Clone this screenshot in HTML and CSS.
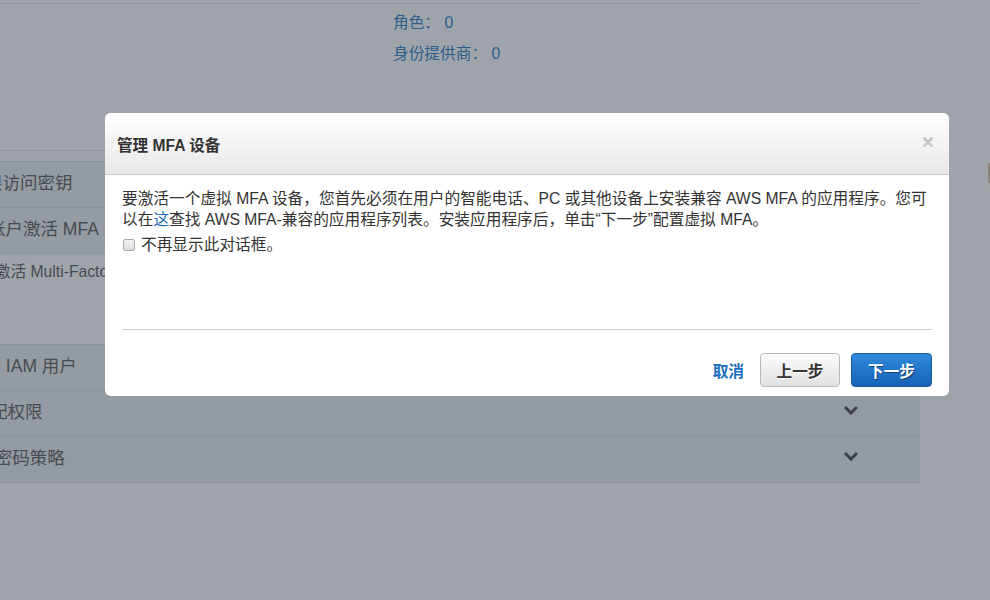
FILE: index.html
```html
<!DOCTYPE html>
<html lang="zh-CN">
<head>
<meta charset="utf-8">
<title>管理 MFA 设备</title>
<link rel="stylesheet" href="styles.css">
</head>
<body>
<div class="layout">
  <div class="page">
    <div class="topbar"></div>
    <div class="stats">
      <div class="stat">角色： 0</div>
      <div class="stat">身份提供商： 0</div>
    </div>
    <div class="panel">
      <div class="panel-head"></div>
      <div class="row">
        <span class="label label-1">删除您的根访问密钥</span>
        <svg class="chev" width="16" height="10" viewBox="0 0 16 10"><path d="M2 2l6 6 6-6" fill="none" stroke="currentColor" stroke-width="3"/></svg>
      </div>
      <div class="row">
        <span class="label label-2">在您的根账户激活 MFA</span>
        <svg class="chev" width="16" height="10" viewBox="0 0 16 10"><path d="M2 2l6 6 6-6" fill="none" stroke="currentColor" stroke-width="3"/></svg>
      </div>
      <div class="sub">
        <span class="sub-text">在您的根账户上激活 Multi-Factor Authentication (MFA)，以提高安全性。</span>
      </div>
      <div class="row">
        <span class="label label-3">创建单个 IAM 用户</span>
        <svg class="chev" width="16" height="10" viewBox="0 0 16 10"><path d="M2 2l6 6 6-6" fill="none" stroke="currentColor" stroke-width="3"/></svg>
      </div>
      <div class="row">
        <span class="label label-4">使用组分配权限</span>
        <svg class="chev" width="16" height="10" viewBox="0 0 16 10"><path d="M2 2l6 6 6-6" fill="none" stroke="currentColor" stroke-width="3"/></svg>
      </div>
      <div class="row">
        <span class="label label-5">应用 IAM 密码策略</span>
        <svg class="chev" width="16" height="10" viewBox="0 0 16 10"><path d="M2 2l6 6 6-6" fill="none" stroke="currentColor" stroke-width="3"/></svg>
      </div>
    </div>
  </div>
  <div class="side">
    <div class="side-edge"></div>
  </div>
</div>

<div class="modal">
  <div class="modal-header">
    <h2 class="modal-title">管理 MFA 设备</h2>
    <svg class="close" width="10" height="10" viewBox="0 0 10 10"><path d="M1.5 1.5l7 7M8.5 1.5l-7 7" stroke="currentColor" stroke-width="3" stroke-linecap="round"/></svg>
  </div>
  <div class="modal-content">
    <div class="modal-body">
      <p class="intro">要激活一个虚拟 MFA 设备，您首先必须在用户的智能电话、PC 或其他设备上安装兼容 AWS MFA 的应用程序。您可以在<a class="link" href="#">这</a>查找 AWS MFA-兼容的应用程序列表。安装应用程序后，单击“下一步”配置虚拟 MFA。</p>
      <label class="check"><input type="checkbox" class="box"><span>不再显示此对话框。</span></label>
    </div>
    <div class="modal-footer">
      <a class="cancel" href="#">取消</a>
      <button class="btn btn-default">上一步</button>
      <button class="btn btn-primary">下一步</button>
    </div>
  </div>
</div>
</body>
</html>
```

FILE: styles.css
```css
html, body {
  margin: 0;
  padding: 0;
}
body {
  background: #9ea4aa;
  font-family: "Liberation Sans", "Noto Sans CJK SC", sans-serif;
  font-size: 15.7px;
  color: #333;
  width: 990px;
  height: 600px;
  overflow: hidden;
  position: relative;
}
.layout {
  display: flex;
}
.page {
  width: 920px;
  flex: none;
}
.side {
  margin-left: 68px;
  width: 2px;
}
.side-edge {
  margin-top: 163px;
  height: 20px;
  background: #8b8679;
  border-bottom: 9px solid #a0a5aa;
}
.topbar {
  height: 3px;
  border-bottom: 1px solid #8c9298;
}
.stats {
  padding: 8px 0 0 393px;
  display: flex;
  flex-direction: column;
  gap: 10px;
}
.stat {
  line-height: 21px;
  color: #2d5e8a;
}
.panel {
  margin-top: 86px;
  border-top: 1px solid #8f959b;
  border-bottom: 1px solid #8d939a;
  background: #959ba2;
  overflow: hidden;
}
.panel-head {
  height: 10px;
  background: #9da3a9;
}
.row {
  height: 38px;
  border-top: 1px solid #8d939a;
  display: flex;
  align-items: center;
  justify-content: space-between;
  padding-right: 61px;
  padding-bottom: 7px;
}
.label {
  font-size: 17.5px;
  color: #474c52;
  white-space: nowrap;
}
.label-1 { margin-left: -85px; }
.label-2 { margin-left: -82px; }
.label-3 { margin-left: -69px; }
.label-4 { margin-left: -80px; }
.label-5 { margin-left: -81px; }
.chev {
  color: #3d4248;
  flex: none;
}
.sub {
  height: 91px;
  border-top: 1px solid #8f959b;
  background: #9ea4aa;
  padding-top: 8px;
  box-sizing: border-box;
  overflow: hidden;
}
.sub-text {
  display: block;
  margin-left: -115px;
  white-space: nowrap;
  color: #474c52;
  line-height: 20px;
}

.modal {
  position: absolute;
  left: 105px;
  top: 113px;
  width: 844px;
  height: 283px;
  background: #fff;
  border-radius: 6px;
  overflow: hidden;
  display: flex;
  flex-direction: column;
}
.modal-header {
  height: 61px;
  flex: none;
  border-bottom: 1px solid #c9c9c9;
  background: linear-gradient(#ffffff, #e8e8e8);
  display: flex;
  align-items: center;
  justify-content: space-between;
  padding: 0 16px 0 12px;
}
.modal-title {
  margin: 0;
  font-size: 15.6px;
  font-weight: bold;
  color: #333;
}
.close {
  color: #c6c6c6;
  margin-top: -3px;
}
.modal-content {
  flex: 1;
  display: flex;
  flex-direction: column;
  padding: 0 17px;
}
.modal-body {
  flex: 1;
  padding-top: 13px;
}
.intro {
  margin: 0;
  line-height: 21px;
  color: #333;
}
.link {
  color: #1f6fb8;
  text-decoration: none;
}
.check {
  display: flex;
  align-items: center;
  margin-top: 4px;
  line-height: 21px;
}
.box {
  appearance: none;
  -webkit-appearance: none;
  width: 12px;
  height: 12px;
  margin: 0 6px 0 1px;
  border: 1px solid #aaaaaa;
  border-radius: 2px;
  background: linear-gradient(#f4f4f4, #dedede);
  box-sizing: border-box;
}
.modal-footer {
  border-top: 1px solid #cccccc;
  padding: 23px 0 9px;
  display: flex;
  justify-content: flex-end;
  align-items: center;
}
.cancel {
  color: #1a6ebf;
  font-weight: bold;
  text-decoration: none;
  margin-right: 16px;
}
.btn {
  font-family: inherit;
  font-size: 15.6px;
  font-weight: bold;
  height: 34px;
  border-radius: 4px;
  padding: 0;
  margin: 0;
  box-sizing: border-box;
  white-space: nowrap;
  text-align: center;
}
.btn-default {
  width: 80px;
  border: 1px solid #b9b9b9;
  background: linear-gradient(#fbfbfb, #e1e1e1);
  color: #333;
  text-shadow: 0 1px 0 #fff;
  margin-right: 11px;
}
.btn-primary {
  width: 81px;
  border: 1px solid #1a5ca4;
  background: linear-gradient(#3189da, #1463b6);
  color: #fff;
  text-shadow: 1px 1px 0 rgba(0,0,0,0.45);
}
```
